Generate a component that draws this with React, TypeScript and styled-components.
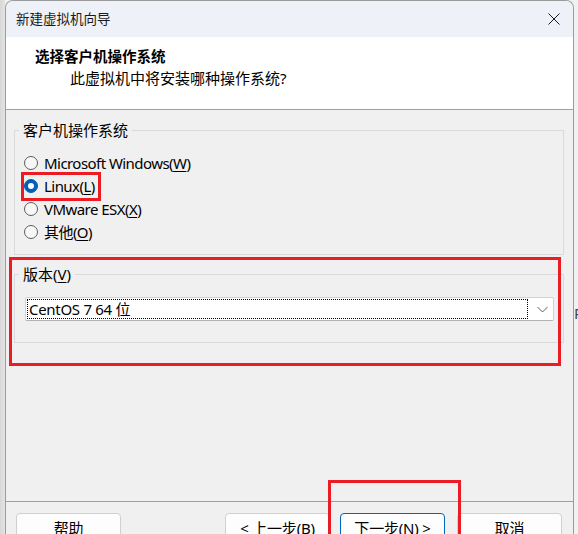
import React from "react";
import styled, { createGlobalStyle } from "styled-components";

const GlobalStyle = createGlobalStyle`
  html, body { margin: 0; padding: 0; }
  body {
    background: #efefef;
    font-family: "Noto Sans", "Noto Sans CJK SC", sans-serif;
    color: #000;
    overflow: hidden;
  }
  * { box-sizing: border-box; }
`;

const Desktop = styled.div`
  position: relative;
  width: 578px;
  height: 534px;
  overflow: hidden;
  padding-left: 5px;
  background: linear-gradient(to right, #d8d8d8 0, #e4e4e4 5px, #f1f1f1 5px);
`;

const Window = styled.div`
  width: 569px;
  border: 1px solid #9c9c9c;
  border-bottom: none;
  border-radius: 8px 8px 0 0;
  background: #f0f0f0;
  overflow: hidden;
  display: flex;
  flex-direction: column;
`;

const TitleBar = styled.div`
  height: 36px;
  background: #eef2f8;
  display: flex;
  align-items: center;
  justify-content: space-between;
  padding: 0 13px 0 10px;
`;

const TitleText = styled.span`
  font-size: 13.5px;
  line-height: 18px;
  color: #1a1a1a;
`;

const CloseIcon = styled.svg`
  width: 12px;
  height: 12px;
  display: block;
`;

const Header = styled.div`
  height: 73px;
  background: #fff;
  border-bottom: 1px solid #a0a0a0;
  padding: 9px 0 0 29px;
`;

const HeaderTitle = styled.div`
  font-size: 14.5px;
  font-weight: 700;
  line-height: 20px;
`;

const HeaderSub = styled.div`
  font-size: 15px;
  line-height: 20px;
  margin: 2px 0 0 35px;
`;

const Body = styled.div`
  height: 391px;
  padding: 10px 9px 0 8px;
  display: flex;
  flex-direction: column;
  gap: 9px;
`;

const Group = styled.fieldset`
  margin: 0;
  border: 1px solid #dadada;
  padding: 0;
  min-width: 0;
`;

const GroupContent = styled.div<{ $pad: string }>`
  padding: ${(p) => p.$pad};
`;

const Legend = styled.legend`
  font-size: 15px;
  line-height: 20px;
  padding: 0 4px;
  margin-left: 4px;
`;

const RadioRow = styled.label`
  display: flex;
  align-items: center;
  height: 23px;
  gap: 6px;
  font-size: 15px;
  line-height: 20px;
  letter-spacing: -0.55px;
`;

const RadioCircle = styled.span<{ $on?: boolean }>`
  width: 14px;
  height: 14px;
  border-radius: 50%;
  flex: none;
  display: flex;
  align-items: center;
  justify-content: center;
  background: ${(p) => (p.$on ? "#005fb8" : "#f7f7f7")};
  border: 1px solid ${(p) => (p.$on ? "#005fb8" : "#5d5d5d")};
  &::after {
    content: "";
    display: ${(p) => (p.$on ? "block" : "none")};
    width: 6px;
    height: 6px;
    border-radius: 50%;
    background: #fff;
  }
`;

const Key = styled.span`
  text-decoration: underline;
  text-underline-offset: 2px;
  text-decoration-thickness: 1px;
`;

const Combo = styled.div`
  height: 24px;
  background: #fff;
  border: 1px solid #d2d2d2;
  border-bottom-color: #b4b4b4;
  border-radius: 2px;
  display: flex;
  align-items: center;
  padding: 0 4px 0 1px;
`;

const ComboValue = styled.div`
  flex: 1;
  height: 20px;
  border: 1px dotted #000;
  font-size: 15px;
  line-height: 18px;
  letter-spacing: -0.3px;
  padding-left: 1px;
  margin-right: 9px;
`;

const Chevron = styled.svg`
  width: 11px;
  height: 7px;
  margin-right: 1px;
  display: block;
`;

const Footer = styled.div`
  border-top: 1px solid #a0a0a0;
  padding: 11px 11px 0 10px;
  display: flex;
  height: 60px;
`;

const Button = styled.button<{ $primary?: boolean; $gap?: number }>`
  width: 105px;
  height: 30px;
  margin-left: ${(p) => p.$gap ?? 0}px;
  border-radius: 4px;
  border: 1px solid ${(p) => (p.$primary ? "#0067c0" : "#d0d0d0")};
  background: #fdfdfd;
  font-family: inherit;
  font-size: 15px;
  line-height: 20px;
  letter-spacing: -0.2px;
  color: #000;
  padding: 0;
`;

const Spacer = styled.div`
  flex: 1;
`;

const Mark = styled.div`
  position: absolute;
  border: 3px solid #ec1c24;
`;

const StrayGlyph = styled.span`
  position: absolute;
  left: 574px;
  top: 303px;
  font-size: 15px;
  color: #444;
`;

export default function App() {
  return (
    <>
      <GlobalStyle />
      <Desktop>
        <StrayGlyph>P</StrayGlyph>
        <Window>
          <TitleBar>
            <TitleText>新建虚拟机向导</TitleText>
            <CloseIcon viewBox="0 0 12 12">
              <path d="M0.5 0.5 L11.5 11.5 M11.5 0.5 L0.5 11.5" stroke="#1a1a1a" strokeWidth="1" />
            </CloseIcon>
          </TitleBar>
          <Header>
            <HeaderTitle>选择客户机操作系统</HeaderTitle>
            <HeaderSub>此虚拟机中将安装哪种操作系统?</HeaderSub>
          </Header>
          <Body>
            <Group>
              <Legend>客户机操作系统</Legend>
              <GroupContent $pad="11px 0 11px 9px">
                <RadioRow>
                  <RadioCircle />
                  <span>
                    Microsoft Windows(<Key>W</Key>)
                  </span>
                </RadioRow>
                <RadioRow>
                  <RadioCircle $on />
                  <span>
                    Linux(<Key>L</Key>)
                  </span>
                </RadioRow>
                <RadioRow>
                  <RadioCircle />
                  <span>
                    VMware ESX(<Key>X</Key>)
                  </span>
                </RadioRow>
                <RadioRow>
                  <RadioCircle />
                  <span>
                    其他(<Key>O</Key>)
                  </span>
                </RadioRow>
              </GroupContent>
            </Group>
            <Group>
              <Legend>
                版本(<Key>V</Key>)
              </Legend>
              <GroupContent $pad="13px 9px 21px 10px">
                <Combo>
                  <ComboValue>CentOS 7 64 位</ComboValue>
                  <Chevron viewBox="0 0 11 7">
                    <path d="M0.5 1 L5.5 6 L10.5 1" fill="none" stroke="#606060" strokeWidth="1" />
                  </Chevron>
                </Combo>
              </GroupContent>
            </Group>
          </Body>
          <Footer>
            <Button>帮助</Button>
            <Spacer />
            <Button>
              &lt; 上一步(<Key>B</Key>)
            </Button>
            <Button $primary $gap={10}>
              下一步(<Key>N</Key>) &gt;
            </Button>
            <Button $gap={12}>取消</Button>
          </Footer>
        </Window>
        <Mark style={{ left: 21, top: 172, width: 80, height: 29 }} />
        <Mark style={{ left: 9, top: 257, width: 552, height: 109 }} />
        <Mark style={{ left: 328, top: 480, width: 133, height: 70, borderBottom: "none" }} />
      </Desktop>
    </>
  );
}
